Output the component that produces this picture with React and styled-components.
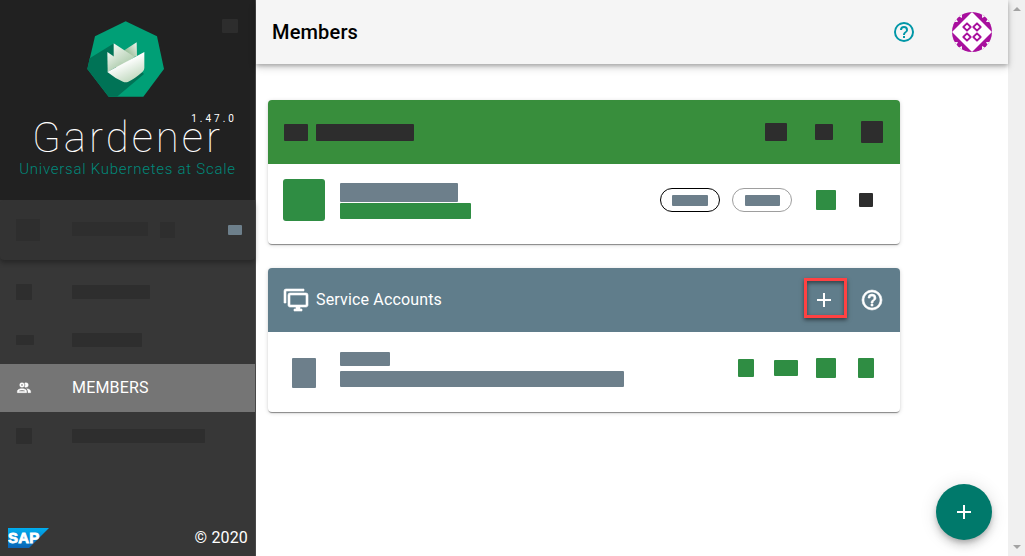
import React from 'react';
import styled, { createGlobalStyle, css } from 'styled-components';

const colors = {
  ink: '#2d2d2d',
  green: '#2f8d43',
  slate: '#6d7f8b',
  faint: '#2e2e2e',
};

const GlobalStyle = createGlobalStyle`
  *, *::before, *::after { box-sizing: border-box; }
  body {
    margin: 0;
    background: #fff;
    color: #000;
    font-family: Roboto, "Liberation Sans", sans-serif;
    font-size: 16px;
    line-height: 24px;
    letter-spacing: 0.01em;
  }
  h1, h2, p, ul { margin: 0; padding: 0; }
`;

const Shell = styled.div`
  display: grid;
  grid-template-columns: 256px minmax(0, 1fr) 17px;
  min-height: 100vh;
`;

const Sidebar = styled.aside`
  display: flex;
  flex-direction: column;
  background: #373737;
  border-right: 1px solid #484848;
  color: #fff;
`;

const Brand = styled.div`
  position: relative;
  display: flex;
  flex-direction: column;
  align-items: center;
  height: 200px;
  padding-top: 21px;
  background: #212121;
`;

const BrandName = styled.h2`
  margin-top: 21px;
  font-size: 42px;
  line-height: 40px;
  font-weight: 100;
  letter-spacing: 3px;
`;

const Tagline = styled.p`
  font-size: 15px;
  line-height: 22px;
  font-weight: 300;
  letter-spacing: 0.05em;
  color: #00897b;
`;

const Version = styled.span`
  position: absolute;
  top: 113px;
  right: 18px;
  font-size: 10px;
  line-height: 12px;
  letter-spacing: 3px;
`;

const Collapse = styled.div`
  position: absolute;
  top: 19px;
  right: 17px;
`;

const Block = styled.span`
  display: block;
  flex: none;
  width: ${(p) => p.$w}px;
  height: ${(p) => p.$h}px;
  border-radius: ${(p) => (p.$round ? 3 : 1)}px;
  background: ${(p) => colors[p.$tone]};
`;

const Project = styled.div`
  display: flex;
  align-items: center;
  height: 60px;
  padding: 0 13px 0 16px;
  border-radius: 4px;
  background: #333;
  box-shadow: 0 3px 5px rgba(0, 0, 0, 0.3);
`;

const ProjectName = styled.div`
  display: flex;
  flex: 1;
  gap: 12px;
`;

const NavList = styled.ul`
  flex: 1;
  padding-top: 8px;
  list-style: none;
`;

const NavLink = styled.a`
  display: flex;
  align-items: center;
  height: 48px;
  padding: 0 16px;
  color: #fff;
  text-decoration: none;
  ${(p) => p.$active && css`background: #757575;`}
`;

const NavIcon = styled.span`
  display: flex;
  flex: none;
  width: 56px;
`;

const SideFooter = styled.footer`
  display: flex;
  align-items: center;
  justify-content: space-between;
  height: 36px;
  padding: 0 7px 0 8px;
`;

const Main = styled.main`
  position: relative;
`;

const TopBar = styled.header`
  display: flex;
  align-items: center;
  height: 64px;
  padding: 0 16px;
  background: #f5f5f5;
  box-shadow: 0 2px 4px rgba(0, 0, 0, 0.25), 0 4px 8px rgba(0, 0, 0, 0.14);
`;

const PageTitle = styled.h1`
  flex: 1;
  font-size: 20px;
  line-height: 28px;
  font-weight: 500;
`;

const IconButton = styled.button`
  position: relative;
  display: flex;
  align-items: center;
  justify-content: center;
  width: 48px;
  height: 48px;
  padding: 0;
  border: 0;
  background: none;
  color: ${(p) => p.$color || '#fff'};
`;

const AvatarButton = styled.button`
  display: flex;
  margin-left: 24px;
  padding: 0;
  border: 0;
  border-radius: 50%;
  background: none;
`;

const Content = styled.div`
  display: flex;
  flex-direction: column;
  gap: 24px;
  padding: 36px 108px 36px 12px;
`;

const Card = styled.section`
  border-radius: 4px;
  background: #fff;
  box-shadow: 0 2px 1px -1px rgba(0, 0, 0, 0.3), 0 1px 1px rgba(0, 0, 0, 0.16),
    0 1px 4px rgba(0, 0, 0, 0.16);
`;

const CardHeader = styled.header`
  display: flex;
  align-items: center;
  gap: 8px;
  height: 64px;
  padding: 0 4px 0 16px;
  border-radius: 4px 4px 0 0;
  background: ${(p) => p.$bg};
  color: #fff;
`;

const CardTitle = styled.h2`
  font-size: 16px;
  line-height: 24px;
  font-weight: 400;
`;

const HeaderActions = styled.div`
  display: flex;
  margin-left: auto;
`;

const HeaderSlot = styled.div`
  display: flex;
  align-items: center;
  justify-content: center;
  width: 48px;
  height: 48px;
`;

const Row = styled.div`
  display: flex;
  align-items: center;
  height: 72px;
  padding-right: 14px;
`;

const CardBody = styled.div`
  padding-bottom: 8px;
`;

const Leading = styled.div`
  display: flex;
  align-self: stretch;
  align-items: ${(p) => (p.$low ? 'flex-end' : 'center')};
  justify-content: center;
  width: 72px;
  padding-bottom: ${(p) => (p.$low ? 16 : 0)}px;
`;

const Lines = styled.div`
  display: flex;
  flex: 1;
  flex-direction: column;
  gap: ${(p) => p.$gap}px;
  padding-top: 2px;
`;

const Chips = styled.div`
  display: flex;
  gap: 12px;
  margin-right: 14px;
`;

const Chip = styled.span`
  display: flex;
  align-items: center;
  justify-content: center;
  width: 60px;
  height: 24px;
  border: 1px solid ${(p) => (p.$strong ? '#000' : '#9e9e9e')};
  border-radius: 12px;
`;

const RowSlot = styled.div`
  display: flex;
  justify-content: center;
  width: 40px;
`;

const Highlight = styled.span`
  position: absolute;
  top: 2px;
  left: 4px;
  width: 43px;
  height: 40px;
  border: 3px solid #ff4142;
  box-shadow: 0 2px 4px rgba(0, 0, 0, 0.5), inset 0 2px 4px rgba(0, 0, 0, 0.5);
`;

const Fab = styled.button`
  position: fixed;
  right: 33px;
  bottom: 16px;
  display: flex;
  align-items: center;
  justify-content: center;
  width: 56px;
  height: 56px;
  padding: 0;
  border: 0;
  border-radius: 50%;
  background: #00796b;
  color: #fff;
  box-shadow: 0 3px 5px -1px rgba(0, 0, 0, 0.2), 0 6px 10px rgba(0, 0, 0, 0.14),
    0 1px 18px rgba(0, 0, 0, 0.12);
`;

const ScrollTrack = styled.div`
  display: flex;
  flex-direction: column;
  justify-content: space-between;
  align-items: center;
  padding: 6px 0;
  background: #f0f0f0;
`;

const paths = {
  plus: 'M19,13H13V19H11V13H5V11H11V5H13V11H19V13Z',
  help: 'M11,18H13V16H11V18M12,2A10,10 0 0,0 2,12A10,10 0 0,0 12,22A10,10 0 0,0 22,12A10,10 0 0,0 12,2M12,20C7.59,20 4,16.41 4,12C4,7.59 7.59,4 12,4C16.41,4 20,7.59 20,12C20,16.41 16.41,20 12,20M12,6A4,4 0 0,0 8,10H10A2,2 0 0,1 12,8A2,2 0 0,1 14,10C14,12 11,11.75 11,15H13C13,12.75 16,12.5 16,10A4,4 0 0,0 12,6Z',
  monitors: 'M22,17V7H6V17H22M22,5A2,2 0 0,1 24,7V17C24,18.11 23.1,19 22,19H16V21H18V23H10V21H12V19H6C4.89,19 4,18.11 4,17V7A2,2 0 0,1 6,5H22M2,3V15H0V3A2,2 0 0,1 2,1H20V3H2Z',
  people: 'M13.07 10.41A5 5 0 0 0 13.07 4.59A3.39 3.39 0 0 1 15 4A3.5 3.5 0 0 1 15 11A3.39 3.39 0 0 1 13.07 10.41M5.5 7.5A3.5 3.5 0 1 1 9 11A3.5 3.5 0 0 1 5.5 7.5M7.5 7.5A1.5 1.5 0 1 0 9 6A1.5 1.5 0 0 0 7.5 7.5M16 17V19H2V17S2 13 9 13 16 17 16 17M14 17C13.86 16.22 12.67 15 9 15S4.07 16.31 4 17M15.95 13A5.32 5.32 0 0 1 18 17V19H22V17S22 13.37 15.94 13Z',
};

function Icon({ name, size = 24, weight = 0 }) {
  return (
    <svg
      width={size}
      height={size}
      viewBox="0 0 24 24"
      fill="currentColor"
      stroke="currentColor"
      strokeWidth={weight}
      overflow="visible"
      aria-hidden="true"
    >
      <path d={paths[name]} />
    </svg>
  );
}

function GardenerLogo() {
  return (
    <svg width="82" height="76" viewBox="261 63 246 228" aria-hidden="true">
      <defs>
        <linearGradient id="front" x1="0.3" y1="0.2" x2="0.75" y2="1">
          <stop offset="0.2" stopColor="#ffffff" />
          <stop offset="1" stopColor="#b9d4b7" />
        </linearGradient>
        <linearGradient id="side" x1="0" y1="0" x2="0.6" y2="1">
          <stop offset="0" stopColor="#f4f8f3" />
          <stop offset="1" stopColor="#a9c9a8" />
        </linearGradient>
        <linearGradient id="back" x1="1" y1="0" x2="0.2" y2="0.8">
          <stop offset="0" stopColor="#f1f6f0" />
          <stop offset="1" stopColor="#8fb890" />
        </linearGradient>
      </defs>
      <path d="M377 64L471 109L492 207L430 290H326L262 207L285 109Z" fill="#009f76" />
      <path d="M342 130L269 175L262 207L326 290H351L432 222Z" fill="#007356" />
      <path d="M410 127L373 151L390 175L411 168Z" fill="url(#back)" />
      <path d="M341 130L404 171L350 206L341 170Z" fill="url(#side)" />
      <path d="M322 156L370 189L323 216Z" fill="url(#side)" />
      <path d="M322 216L433 156V204Q433 211 427 216Q405 236 385 245Q377 249 369 245Q345 235 322 216Z" fill="url(#front)" />
    </svg>
  );
}

function SapLogo() {
  return (
    <svg width="41" height="20" viewBox="0 0 41 20" role="img" aria-label="SAP">
      <defs>
        <linearGradient id="sap" x1="0" y1="0" x2="0" y2="1">
          <stop offset="0" stopColor="#00aeef" />
          <stop offset="1" stopColor="#0b63b5" />
        </linearGradient>
      </defs>
      <path d="M0 0H41L21 20H0Z" fill="url(#sap)" />
      <text x="0" y="15" fill="#fff" stroke="#fff" strokeWidth="0.8" fontFamily="Liberation Sans, sans-serif" fontSize="15" fontWeight="700">SAP</text>
    </svg>
  );
}

function Identicon() {
  return (
    <svg width="40" height="40" viewBox="0 0 40 40" aria-hidden="true">
      <defs>
        <clipPath id="round"><circle cx="20" cy="20" r="20" /></clipPath>
      </defs>
      <g clipPath="url(#round)">
        <rect width="40" height="40" fill="#a80f9d" />
        <path d="M20 0L40 20L20 40L0 20Z" fill="#fff" />
        {[0, 90, 180, 270].map((a) => (
          <path key={a} d="M30 0V6L34 4ZM40 10H34L37 4Z" fill="#f5f5f5" transform={`rotate(${a} 20 20)`} />
        ))}
        <g fill="none" stroke="#a80f9d" strokeWidth="1.8" strokeLinejoin="round">
          {[[15, 15], [25, 15], [15, 25], [25, 25]].map(([x, y]) => (
            <path key={`${x}-${y}`} d={`M${x} ${y - 3.7}L${x + 3.7} ${y}L${x} ${y + 3.7}L${x - 3.7} ${y}Z`} />
          ))}
        </g>
      </g>
    </svg>
  );
}

function NavItem({ icon, label }) {
  return (
    <li>
      <NavLink href="#">
        <NavIcon><Block $tone="faint" $w={icon[0]} $h={icon[1]} /></NavIcon>
        <Block $tone="faint" $w={label} $h={14} />
      </NavLink>
    </li>
  );
}

export default function App() {
  return (
    <>
      <GlobalStyle />
      <Shell>
        <Sidebar>
          <Brand>
            <GardenerLogo />
            <BrandName>Gardener</BrandName>
            <Tagline>Universal Kubernetes at Scale</Tagline>
            <Version>1.47.0</Version>
            <Collapse><Block $tone="ink" $w={16} $h={14} /></Collapse>
          </Brand>
          <Project>
            <NavIcon><Block $tone="faint" $w={24} $h={22} /></NavIcon>
            <ProjectName>
              <Block $tone="faint" $w={76} $h={14} />
              <Block $tone="faint" $w={15} $h={16} />
            </ProjectName>
            <Block $tone="slate" $w={14} $h={10} />
          </Project>
          <NavList>
            <NavItem icon={[16, 16]} label={78} />
            <NavItem icon={[18, 10]} label={70} />
            <li>
              <NavLink href="#members" $active>
                <NavIcon><Icon name="people" size={16} weight={0.6} /></NavIcon>
                MEMBERS
              </NavLink>
            </li>
            <NavItem icon={[16, 16]} label={133} />
          </NavList>
          <SideFooter>
            <SapLogo />
            <span>© 2020</span>
          </SideFooter>
        </Sidebar>
        <Main>
          <TopBar>
            <PageTitle>Members</PageTitle>
            <IconButton $color="#0097a7" aria-label="Help"><Icon name="help" /></IconButton>
            <AvatarButton aria-label="Account"><Identicon /></AvatarButton>
          </TopBar>
          <Content>
            <Card>
              <CardHeader $bg="#388e3c">
                <Block $tone="ink" $w={24} $h={17} />
                <Block $tone="ink" $w={98} $h={17} />
                <HeaderActions>
                  <HeaderSlot><Block $tone="ink" $w={22} $h={18} /></HeaderSlot>
                  <HeaderSlot><Block $tone="ink" $w={18} $h={16} /></HeaderSlot>
                  <HeaderSlot><Block $tone="ink" $w={22} $h={22} /></HeaderSlot>
                </HeaderActions>
              </CardHeader>
              <CardBody>
                <Row>
                  <Leading><Block $tone="green" $w={42} $h={42} $round /></Leading>
                  <Lines $gap={1}>
                    <Block $tone="slate" $w={118} $h={19} />
                    <Block $tone="green" $w={131} $h={16} />
                  </Lines>
                  <Chips>
                    <Chip $strong><Block $tone="slate" $w={36} $h={11} /></Chip>
                    <Chip><Block $tone="slate" $w={35} $h={11} /></Chip>
                  </Chips>
                  <RowSlot><Block $tone="green" $w={20} $h={20} /></RowSlot>
                  <RowSlot><Block $tone="ink" $w={14} $h={14} /></RowSlot>
                </Row>
              </CardBody>
            </Card>
            <Card>
              <CardHeader $bg="#607d8b">
                <Icon name="monitors" weight={0.6} />
                <CardTitle>Service Accounts</CardTitle>
                <HeaderActions>
                  <IconButton aria-label="Create service account">
                    <Icon name="plus" />
                    <Highlight />
                  </IconButton>
                  <IconButton aria-label="Service account help"><Icon name="help" weight={0.6} /></IconButton>
                </HeaderActions>
              </CardHeader>
              <CardBody>
                <Row>
                  <Leading $low><Block $tone="slate" $w={24} $h={30} /></Leading>
                  <Lines $gap={5}>
                    <Block $tone="slate" $w={50} $h={14} />
                    <Block $tone="slate" $w={284} $h={16} />
                  </Lines>
                  <RowSlot><Block $tone="green" $w={16} $h={18} /></RowSlot>
                  <RowSlot><Block $tone="green" $w={24} $h={16} /></RowSlot>
                  <RowSlot><Block $tone="green" $w={20} $h={20} /></RowSlot>
                  <RowSlot><Block $tone="green" $w={16} $h={20} /></RowSlot>
                </Row>
              </CardBody>
            </Card>
          </Content>
          <Fab aria-label="Add member"><Icon name="plus" /></Fab>
        </Main>
        <ScrollTrack aria-hidden="true">
          <svg width="8" height="6" viewBox="0 0 8 6"><path d="M0 5L4 1L8 5Z" fill="#a3a3a3" /></svg>
          <svg width="8" height="6" viewBox="0 0 8 6"><path d="M0 1L4 5L8 1Z" fill="#a3a3a3" /></svg>
        </ScrollTrack>
      </Shell>
    </>
  );
}
